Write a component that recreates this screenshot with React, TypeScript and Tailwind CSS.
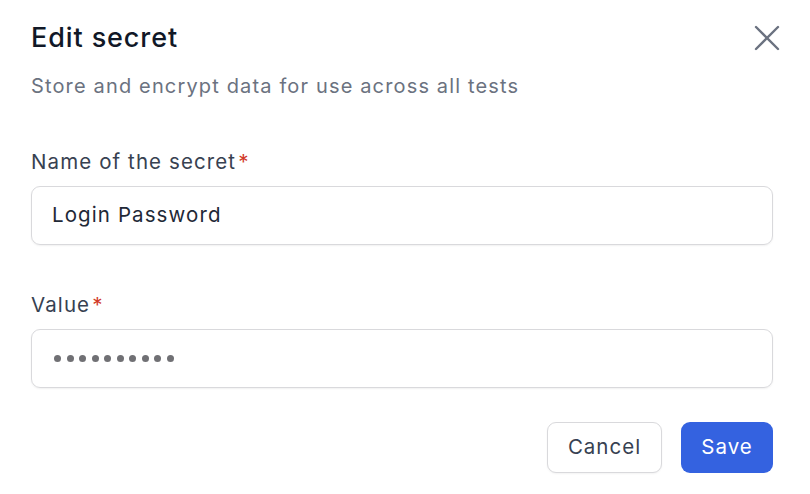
import React from "react";

export default function App() {
  const font = { fontFamily: "Inter, 'Noto Sans', sans-serif" };
  return (
    <div style={font} className="w-[810px] h-[494px] bg-white relative px-[31px] pt-[22px] antialiased">
      <button className="absolute left-[754px] top-[25px] w-[26px] h-[26px] flex items-center justify-center text-[#6b7280]">
        <svg width="26" height="26" viewBox="0 0 26 26" fill="none" stroke="currentColor" strokeWidth="2.4" strokeLinecap="round">
          <path d="M2 2L24 24M24 2L2 24" />
        </svg>
      </button>
      <h1 className="text-[27px] leading-[32px] font-medium text-[#111827] tracking-[0.9px]">Edit secret</h1>
      <p className="mt-[18px] text-[20px] leading-[28px] text-[#6b7280] tracking-[1.15px]">Store and encrypt data for use across all tests</p>

      <div className="mt-[48px] flex flex-col">
        <label className="text-[20.5px] leading-[28px] font-normal text-[#374151] tracking-[1.1px]">
          Name of the secret<span className="text-[#d23a2a] ml-[2px]">*</span>
        </label>
        <div className="mt-[10px] h-[59px] w-[742px] rounded-[9px] border border-[#d9d9dc] shadow-[0_1px_2px_rgba(0,0,0,0.06)] flex items-center px-[20px] text-[20.5px] text-[#1f2937] tracking-[1.1px]">
          Login Password
        </div>
      </div>

      <div className="mt-[46px] flex flex-col">
        <label className="text-[20.5px] leading-[28px] font-normal text-[#374151] tracking-[1.1px]">
          Value<span className="text-[#d23a2a] ml-[2px]">*</span>
        </label>
        <div className="mt-[10px] h-[59px] w-[742px] rounded-[9px] border border-[#d9d9dc] shadow-[0_1px_2px_rgba(0,0,0,0.06)] flex items-center px-[22px] gap-[5.5px]">
          {Array.from({ length: 10 }).map((_, i) => (
            <span key={i} className="w-[7px] h-[7px] rounded-full bg-[#707074]" />
          ))}
        </div>
      </div>

      <div className="mt-[34px] w-[742px] flex justify-end gap-[19px]">
        <button className="h-[51px] w-[115px] rounded-[9px] border border-[#d9d9dc] bg-white text-[20.5px] font-normal text-[#374151] tracking-[1px] shadow-[0_1px_2px_rgba(0,0,0,0.05)]">
          Cancel
        </button>
        <button className="h-[51px] w-[92px] rounded-[9px] bg-[#3462e0] text-[20.5px] font-normal text-white tracking-[1px]">
          Save
        </button>
      </div>
    </div>
  );
}
